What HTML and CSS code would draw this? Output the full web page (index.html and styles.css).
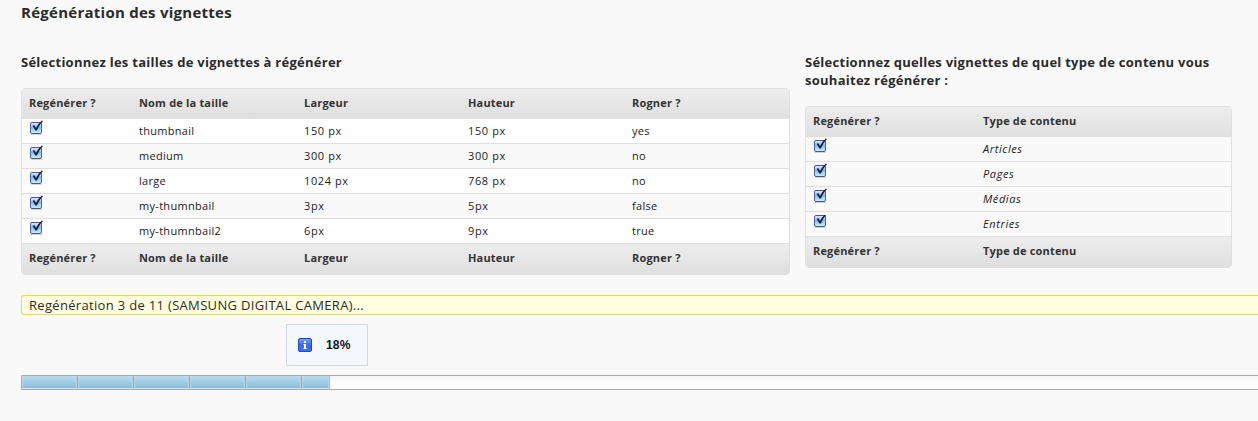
FILE: index.html
```html
<!DOCTYPE html>
<html lang="fr">
<head>
<meta charset="utf-8">
<title>Régénération des vignettes</title>
<link rel="stylesheet" href="styles.css">
</head>
<body>
<svg class="defs" width="0" height="0" aria-hidden="true">
  <defs>
    <linearGradient id="box" x1="0" y1="0" x2="0" y2="1">
      <stop offset="0" stop-color="#e4eefb"/><stop offset=".45" stop-color="#86b8ee"/><stop offset="1" stop-color="#c9f4ff"/>
    </linearGradient>
    <linearGradient id="edge" x1="0" y1="0" x2="0" y2="1">
      <stop offset="0" stop-color="#5450a8"/><stop offset=".5" stop-color="#3f6fc0"/><stop offset="1" stop-color="#4c5870"/>
    </linearGradient>
    <linearGradient id="blue" x1="0" y1="0" x2="0" y2="1">
      <stop offset="0" stop-color="#7da0f2"/><stop offset=".5" stop-color="#3c68e2"/><stop offset="1" stop-color="#3f72f5"/>
    </linearGradient>
    <symbol id="check" viewBox="0 0 14 16">
      <rect x="1" y="14" width="11" height="1" rx=".5" fill="#000" opacity=".16"/>
      <rect x=".5" y="2.5" width="11" height="11" rx="1.5" fill="url(#box)" stroke="url(#edge)"/>
      <path d="M2.600 5.800L4.400 5.200L6 7.900Q8.600 3.200 11.800 .5L13 1Q8.900 5.200 6.800 10.500H5.400Z" fill="#182034"/>
    </symbol>
  </defs>
</svg>
<main class="page">
  <h2 class="title"><span>Régénération des vignettes</span></h2>
  <div class="columns">
    <section class="sizes">
      <h3 class="heading">Sélectionnez les tailles de vignettes à régénérer</h3>
      <div class="table">
        <div class="row head"><span>Regénérer ?</span><span>Nom de la taille</span><span>Largeur</span><span>Hauteur</span><span>Rogner ?</span></div>
        <div class="row"><svg class="check"><use href="#check"/></svg><span>thumbnail</span><span class="num">150 px</span><span class="num">150 px</span><span>yes</span></div>
        <div class="row alt"><svg class="check"><use href="#check"/></svg><span>medium</span><span class="num">300 px</span><span class="num">300 px</span><span>no</span></div>
        <div class="row"><svg class="check"><use href="#check"/></svg><span>large</span><span class="num">1024 px</span><span class="num">768 px</span><span>no</span></div>
        <div class="row alt"><svg class="check"><use href="#check"/></svg><span>my-thumnbail</span><span class="num">3px</span><span class="num">5px</span><span>false</span></div>
        <div class="row"><svg class="check"><use href="#check"/></svg><span>my-thumnbail2</span><span class="num">6px</span><span class="num">9px</span><span>true</span></div>
        <div class="row head"><span>Regénérer ?</span><span>Nom de la taille</span><span>Largeur</span><span>Hauteur</span><span>Rogner ?</span></div>
      </div>
    </section>
    <section class="types">
      <h3 class="heading">Sélectionnez quelles vignettes de quel type de contenu vous<br>souhaitez régénérer :</h3>
      <div class="table">
        <div class="row head"><span>Regénérer ?</span><span>Type de contenu</span></div>
        <div class="row alt"><svg class="check"><use href="#check"/></svg><em>Articles</em></div>
        <div class="row alt"><svg class="check"><use href="#check"/></svg><em>Pages</em></div>
        <div class="row alt"><svg class="check"><use href="#check"/></svg><em>Médias</em></div>
        <div class="row alt"><svg class="check clipped"><use href="#check"/></svg><em>Entries</em></div>
        <div class="row head"><span>Regénérer ?</span><span>Type de contenu</span></div>
      </div>
    </section>
  </div>
  <p class="status">Regénération 3 de 11 (SAMSUNG DIGITAL CAMERA)...</p>
  <div class="percent">
    <svg width="14" height="14" viewBox="0 0 14 14">
      <rect x=".5" y=".5" width="13" height="13" rx="1.5" fill="url(#blue)" stroke="#2445bd"/>
      <path d="M6 3h2v2H6zM5.500 6H8v4h.5v1h-3v-1H6V7h-.5z" fill="#fff"/>
    </svg>
    <b>18%</b>
  </div>
  <div class="progress"><div class="fill"><i></i><i></i><i></i><i></i><i></i><i class="last"></i></div></div>
</main>
</body>
</html>
```
FILE: styles.css
```css
* { box-sizing: border-box; }
body {
  margin: 0;
  height: 421px;
  overflow: hidden;
  background: #f9f9f9;
  color: #2b2b2b;
  font-family: "Open Sans", "Noto Sans", sans-serif;
}
.defs { display: block; height: 0; }
.page { padding-left: 21px; height: 421px; }
.title { margin: 0; height: 53px; padding-top: 2px; font-size: 15px; line-height: 20px; font-weight: 700; letter-spacing: 0.26px; }
.columns { display: flex; gap: 15px; height: 242px; }
.sizes { width: 769px; }
.types { width: 427px; }
.heading { margin: 0 0 17px; font-size: 13px; line-height: 18px; font-weight: 700; letter-spacing: 0.26px; white-space: nowrap; }
.table { border: 1px solid #dfdfdf; border-radius: 4px; overflow: hidden; font-size: 11px; }
.row {
  display: grid;
  grid-template-columns: 110px 165px 164px 164px 1fr;
  height: 25px;
  padding-left: 7px;
  border-bottom: 1px solid #dfdfdf;
  background: #fff;
  color: #222;
  line-height: 24px;
  letter-spacing: 0.3px;
}
.types .row { grid-template-columns: 170px 1fr; }
.row.alt { background: #f9f9f9; }
.row.head {
  height: 30px;
  border: 0;
  background: linear-gradient(#ededed, #dfdfdf);
  color: #333;
  font-weight: 700;
  line-height: 27px;
  letter-spacing: 0.18px;
}
.num { letter-spacing: 0.6px; }
.row em { letter-spacing: 0.6px; }
.check { display: block; width: 14px; height: 16px; margin: 1px 0 0 1px; }
.clipped { clip-path: inset(2px 0 0); }
.types .check { margin-left: 1px; }
.status {
  margin: 0;
  height: 20px;
  padding-left: 7px;
  border: 1px solid #e6db55;
  border-right: 0;
  border-radius: 3px 0 0 3px;
  background: #ffffe0;
  font-size: 13px;
  line-height: 19px;
  letter-spacing: 0.32px;
}
.percent {
  display: flex;
  align-items: center;
  width: 82px;
  height: 42px;
  margin: 9px 0 9px 265px;
  padding-left: 11px;
  gap: 14px;
  border: 1px solid #cbd8f3;
  background: #f4f8fd;
  color: #0b1330;
  font: 700 12px "Liberation Sans", Arial, sans-serif;
  letter-spacing: 0.2px;
}
.progress {
  height: 15px;
  border: 1px solid #aaa;
  border-right: 0;
  border-radius: 2px 0 0 2px;
  background: linear-gradient(#f4f4f4, #fff 60%);
}
.fill { display: flex; width: 308px; height: 13px; border-right: 1px solid #a3bfce; }
.fill i {
  flex: 0 0 56px;
  border: 1px solid #b5d9eb;
  border-bottom-color: #cfe3ee;
  border-right: 1px solid #7fa9c0;
  background: linear-gradient(#b4dbf0, #8dbcd9);
  box-shadow: inset -1px 0 #b5d9eb;
}
.fill .last { flex: 1; border-right: 0; }
```
